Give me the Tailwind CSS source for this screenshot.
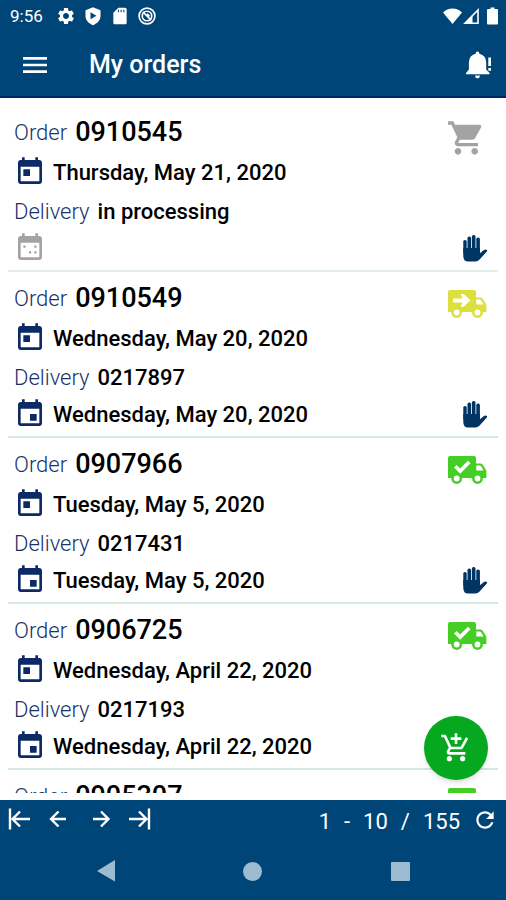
<!doctype html>
<html lang="en">
  <head>
    <meta charset="UTF-8" />
    <meta name="viewport" content="width=device-width, initial-scale=1.0" />
    <script src="https://cdn.jsdelivr.net/npm/@tailwindcss/browser@4"></script>
    <title>My orders</title>
  </head>
  <body class="bg-white text-black font-['Roboto',sans-serif]">
    <!-- Shared icons -->
    <svg class="hidden" aria-hidden="true">
      <symbol id="today" viewBox="0 0 24 24">
        <path d="M19 3h-1V1h-2v2H8V1H6v2H5c-1.11 0-1.99.9-1.99 2L3 19c0 1.1.89 2 2 2h14c1.1 0 2-.9 2-2V5c0-1.1-.9-2-2-2zm0 16H5V8h14v11zM7 10h5v5H7z" />
      </symbol>
      <symbol id="event" viewBox="0 0 24 24">
        <path d="M17 12h-5v5h5v-5zM16 1v2H8V1H6v2H5c-1.11 0-1.99.9-1.99 2L3 19c0 1.1.89 2 2 2h14c1.1 0 2-.9 2-2V5c0-1.1-.9-2-2-2h-1V1h-2zm3 18H5V8h14v11z" />
      </symbol>
      <symbol id="no-date" viewBox="0 0 24 24">
        <path d="M19 3h-1V1h-2v2H8V1H6v2H5c-1.11 0-1.99.9-1.99 2L3 19c0 1.1.89 2 2 2h14c1.1 0 2-.9 2-2V5c0-1.1-.9-2-2-2zm0 16H5V8h14v11z" />
        <path d="M7 10.2h1.7v1.7H7zM15.2 10.2h1.7v1.7h-1.7zM11.2 14.4h1.7v1.7h-1.7zM15.2 14.4h1.7v1.7h-1.7z" />
      </symbol>
      <symbol id="cart" viewBox="1 0 24 24">
        <path d="M7 18c-1.1 0-1.99.9-1.99 2S5.9 22 7 22s2-.9 2-2-.9-2-2-2zM1 2v2h2l3.6 7.59-1.35 2.45c-.16.28-.25.61-.25.96 0 1.1.9 2 2 2h12v-2H7.42c-.14 0-.25-.11-.25-.25l.03-.12.9-1.63h7.45c.75 0 1.41-.41 1.75-1.03l3.58-6.49c.08-.14.12-.31.12-.48 0-.55-.45-1-1-1H5.21l-.94-2H1zm16 16c-1.1 0-1.99.9-1.99 2s.89 2 1.99 2 2-.9 2-2-.9-2-2-2z" />
      </symbol>
      <symbol id="truck" viewBox="0 -6 40 40">
        <path d="M2 0h24q2 0 2 2v5.5h4.2q1.6 0 2.5 1.3l3 4.8q.7 1 .7 2.2V22H0V2Q0 0 2 0z" />
        <path fill="#fff" d="M28.3 9.6h3.5q.9 0 1.4.8l2.5 4H28.3z" />
        <circle cx="8.7" cy="22.5" r="5.4" />
        <circle cx="29.5" cy="22.5" r="5.4" />
        <circle cx="8.7" cy="22.5" r="2.9" fill="#fff" />
        <circle cx="29.5" cy="22.5" r="2.9" fill="#fff" />
      </symbol>
      <symbol id="truck-sent" viewBox="0 -6 40 40">
        <use href="#truck" x="0" y="-6" width="40" height="40" />
        <path fill="#fff" d="M5 8.4h9.4L12.7 4h3l6.8 6.3-6.8 6.4h-3l1.7-4.3H5z" />
      </symbol>
      <symbol id="truck-done" viewBox="0 -6 40 40">
        <use href="#truck" x="0" y="-6" width="40" height="40" />
        <path fill="none" stroke="#fff" stroke-width="3.6" d="M7.3 10.2l4.9 4.9 9-9.2" />
      </symbol>
      <symbol id="hand" viewBox="0 0 25 27">
        <rect x=".3" y="5" width="3.4" height="14" rx="1.6" />
        <rect x="4.5" y="1.6" width="3.6" height="16" rx="1.6" />
        <rect x="8.9" y="0" width="3.6" height="17" rx="1.6" />
        <rect x="13.3" y="2.6" width="3.6" height="16" rx="1.6" />
        <path d="M.3 13h16.6v5.2l4-3.2q1.6-1 3 0 .8.9-.3 1.8l-7 7.7q-1.8 2.1-4.2 2.1H5.2Q.3 26.6.3 21z" />
      </symbol>
    </svg>

    <div class="flex h-screen flex-col">
      <header class="border-b-2 border-[#00276a] bg-[#004577] text-white">
        <div class="flex h-8 items-center pr-2 pl-[10px]">
          <span class="text-[17px] leading-8">9:56</span>
          <div class="ml-[13px] flex items-center gap-[7px]">
            <svg class="size-5" viewBox="0 0 24 24" fill="currentColor">
              <path d="M19.14 12.94c.04-.3.06-.61.06-.94 0-.32-.02-.64-.07-.94l2.03-1.58c.18-.14.23-.41.12-.61l-1.92-3.32c-.12-.22-.37-.29-.59-.22l-2.39.96c-.5-.38-1.03-.7-1.62-.94l-.36-2.54c-.04-.24-.24-.41-.48-.41h-3.84c-.24 0-.43.17-.47.41l-.36 2.54c-.59.24-1.13.57-1.62.94l-2.39-.96c-.22-.08-.47 0-.59.22L2.74 8.87c-.12.21-.08.47.12.61l2.03 1.58c-.05.3-.09.63-.09.94s.02.64.07.94l-2.03 1.58c-.18.14-.23.41-.12.61l1.92 3.32c.12.22.37.29.59.22l2.39-.96c.5.38 1.03.7 1.62.94l.36 2.54c.05.24.24.41.48.41h3.84c.24 0 .44-.17.47-.41l.36-2.54c.59-.24 1.13-.56 1.62-.94l2.39.96c.22.08.47 0 .59-.22l1.92-3.32c.12-.22.07-.47-.12-.61l-2.01-1.58zM12 15.6c-1.98 0-3.6-1.62-3.6-3.6s1.62-3.6 3.6-3.6 3.6 1.62 3.6 3.6-1.62 3.6-3.6 3.6z" />
            </svg>
            <svg class="size-5" viewBox="0 0 24 24" fill="currentColor" fill-rule="evenodd">
              <path d="M12 1.5l9 3.5v7c0 5-3.8 9-9 11-5.2-2-9-6-9-11V5zM9 7.5V16l7-4.2z" />
            </svg>
            <svg class="size-5" viewBox="0 0 24 24" fill="currentColor" fill-rule="evenodd">
              <path d="M18 2h-8L4 8v12c0 1.1.9 2 2 2h12c1.1 0 2-.9 2-2V4c0-1.1-.9-2-2-2zM9.5 4.5h1.3v3H9.5zm3.2 0H14v3h-1.3zm3.2 0h1.3v3h-1.3z" />
            </svg>
            <svg class="size-5" viewBox="0 0 24 24" fill="none" stroke="currentColor" stroke-width="2">
              <circle cx="12" cy="12" r="9.5" />
              <circle cx="12" cy="12" r="5.7" />
              <path d="M7 7l10 10M12 9.5l3 3" />
            </svg>
          </div>
          <div class="ml-auto flex items-center">
            <svg class="h-5 w-[19px]" viewBox="0 0 19 20" fill="currentColor">
              <path d="M0 6.5Q4 2.5 9.5 2.5T19 6.5L9.5 18z" />
            </svg>
            <svg class="ml-px h-5 w-4" viewBox="0 0 16 20" fill="none" stroke="currentColor" stroke-width="1.6">
              <path d="M2 17.2h13V4z" />
              <path fill="currentColor" stroke="none" d="M1 18L9.5 9v9z" />
            </svg>
            <svg class="ml-2 h-5 w-[11px]" viewBox="0 0 11 20" fill="currentColor">
              <path d="M3.500 1.500h4V3H10q1 0 1 1v13.500q0 1-1 1H1q-1 0-1-1V4q0-1 1-1h2.500z" />
            </svg>
          </div>
        </div>
        <div class="flex h-16 items-center pt-[2px] pr-[14px] pl-[19px]">
          <button type="button" aria-label="Menu">
            <svg class="size-8" viewBox="0 0 24 24" fill="currentColor">
              <path d="M3 18h18v-2H3v2zm0-5h18v-2H3v2zm0-7v2h18V6H3z" />
            </svg>
          </button>
          <h1 class="ml-[38px] text-[25px] leading-8 font-medium">My orders</h1>
          <button type="button" class="ml-auto" aria-label="Notifications">
            <svg class="h-7 w-[26px]" viewBox="0 0 26 28" fill="currentColor">
              <path d="M11.5.5q1.7 0 1.9 2.2 6.8 1.8 6.8 8.8v7l3.3 3.6v1.2H0v-1.2l2.9-3.6v-7q0-7 6.7-8.8Q9.800.5 11.5.5z" />
              <path d="M9 24.5h5q-.2 2.7-2.5 2.7T9 24.5zM22.3 6.5H25V15h-2.7zM22.3 17H25v2.7h-2.7z" />
            </svg>
          </button>
        </div>
      </header>

      <div class="relative flex min-h-0 flex-1 flex-col pb-[7px]">
        <main class="min-h-0 flex-1 overflow-hidden px-2 pt-2">
          <article class="flex justify-between border-b-2 border-[#e2efea] px-[6px] pt-[6px] pb-1">
            <div>
              <p class="flex h-10 items-center gap-2 text-[27px] font-medium">
                <span class="text-[22px] font-light text-[#17336b]">Order</span>0910545
              </p>
              <p class="flex h-10 items-center gap-[7px] text-[22px] font-medium">
                <svg class="size-8 fill-[#0b2a66]"><use href="#today" /></svg>Thursday, May 21, 2020
              </p>
              <p class="flex h-[38px] items-center gap-2 text-[22px] font-medium">
                <span class="font-light text-[#17336b]">Delivery</span>in processing
              </p>
              <p class="flex h-9 items-center">
                <svg class="size-8 fill-[#a3a3a3]"><use href="#no-date" /></svg>
              </p>
            </div>
            <div class="flex flex-col items-end justify-between pt-[6px] pr-1 pb-1">
              <svg class="size-10 fill-[#a3a3a3]"><use href="#cart" /></svg>
              <svg class="h-[27px] w-[25px] fill-[#003463]"><use href="#hand" /></svg>
            </div>
          </article>

          <article class="flex justify-between border-b-2 border-[#d5eadf] px-[6px] pt-[6px] pb-1">
            <div>
              <p class="flex h-10 items-center gap-2 text-[27px] font-medium">
                <span class="text-[22px] font-light text-[#17336b]">Order</span>0910549
              </p>
              <p class="flex h-10 items-center gap-[7px] text-[22px] font-medium">
                <svg class="size-8 fill-[#0b2a66]"><use href="#today" /></svg>Wednesday, May 20, 2020
              </p>
              <p class="flex h-[38px] items-center gap-2 text-[22px] font-medium">
                <span class="font-light text-[#17336b]">Delivery</span>0217897
              </p>
              <p class="flex h-9 items-center gap-[7px] text-[22px] font-medium">
                <svg class="size-8 fill-[#0b2a66]"><use href="#event" /></svg>Wednesday, May 20, 2020
              </p>
            </div>
            <div class="flex flex-col items-end justify-between pt-[6px] pr-1 pb-1">
              <svg class="size-10 fill-[#dde03c]"><use href="#truck-sent" /></svg>
              <svg class="h-[27px] w-[25px] fill-[#003463]"><use href="#hand" /></svg>
            </div>
          </article>

          <article class="flex justify-between border-b-2 border-[#d5eadf] px-[6px] pt-[6px] pb-1">
            <div>
              <p class="flex h-10 items-center gap-2 text-[27px] font-medium">
                <span class="text-[22px] font-light text-[#17336b]">Order</span>0907966
              </p>
              <p class="flex h-10 items-center gap-[7px] text-[22px] font-medium">
                <svg class="size-8 fill-[#0b2a66]"><use href="#today" /></svg>Tuesday, May 5, 2020
              </p>
              <p class="flex h-[38px] items-center gap-2 text-[22px] font-medium">
                <span class="font-light text-[#17336b]">Delivery</span>0217431
              </p>
              <p class="flex h-9 items-center gap-[7px] text-[22px] font-medium">
                <svg class="size-8 fill-[#0b2a66]"><use href="#event" /></svg>Tuesday, May 5, 2020
              </p>
            </div>
            <div class="flex flex-col items-end justify-between pt-[6px] pr-1 pb-1">
              <svg class="size-10 fill-[#45cf26]"><use href="#truck-done" /></svg>
              <svg class="h-[27px] w-[25px] fill-[#003463]"><use href="#hand" /></svg>
            </div>
          </article>

          <article class="flex justify-between border-b-2 border-[#d5eadf] px-[6px] pt-[6px] pb-1">
            <div>
              <p class="flex h-10 items-center gap-2 text-[27px] font-medium">
                <span class="text-[22px] font-light text-[#17336b]">Order</span>0906725
              </p>
              <p class="flex h-10 items-center gap-[7px] text-[22px] font-medium">
                <svg class="size-8 fill-[#0b2a66]"><use href="#today" /></svg>Wednesday, April 22, 2020
              </p>
              <p class="flex h-[38px] items-center gap-2 text-[22px] font-medium">
                <span class="font-light text-[#17336b]">Delivery</span>0217193
              </p>
              <p class="flex h-9 items-center gap-[7px] text-[22px] font-medium">
                <svg class="size-8 fill-[#0b2a66]"><use href="#event" /></svg>Wednesday, April 22, 2020
              </p>
            </div>
            <div class="flex flex-col items-end justify-between pt-[6px] pr-1 pb-1">
              <svg class="size-10 fill-[#45cf26]"><use href="#truck-done" /></svg>
            </div>
          </article>

          <article class="flex justify-between px-[6px] pt-[6px]">
            <p class="flex h-10 items-center gap-2 text-[27px] font-medium">
              <span class="text-[22px] font-light text-[#17336b]">Order</span>0905307
            </p>
            <div class="pt-[6px] pr-1">
              <svg class="size-10 fill-[#45cf26]"><use href="#truck-done" /></svg>
            </div>
          </article>
        </main>

        <button
          type="button"
          aria-label="New order"
          class="absolute right-[18px] bottom-5 flex size-16 items-center justify-center rounded-full bg-[#06a81f] text-white shadow-md"
        >
          <svg class="size-8" viewBox="0 0 24 24" fill="currentColor">
            <path d="M11 9h2V6h3V4h-3V1h-2v3H8v2h3v3zm-4 9c-1.1 0-1.99.9-1.99 2S5.9 22 7 22s2-.9 2-2-.9-2-2-2zm10 0c-1.1 0-1.99.9-1.99 2s.89 2 1.99 2 2-.9 2-2-.9-2-2-2zm-9.83-3.25l.03-.12.9-1.63h7.45c.75 0 1.41-.41 1.75-1.03l3.86-7.01L19.42 4h-.01l-1.1 2-2.76 5H8.53l-.13-.27L6.16 6l-.95-2-.94-2H1v2h2l3.6 7.59-1.35 2.45c-.16.28-.25.61-.25.96 0 1.1.9 2 2 2h12v-2H7.42c-.13 0-.25-.11-.25-.25z" />
          </svg>
        </button>
      </div>

      <footer class="bg-[#004577] text-white">
        <div class="flex h-[42px] items-center justify-between px-2 pt-[2px]">
          <div class="flex items-center pb-[6px]">
            <button type="button" aria-label="First page">
              <svg class="h-[22px] w-[22px]" viewBox="0 0 22 22" fill="none" stroke="currentColor" stroke-width="2.4">
                <path d="M2 .5v21M22 11H5M12 3.5L4.5 11l7.5 7.5" />
              </svg>
            </button>
            <button type="button" aria-label="Previous page" class="ml-[19px]">
              <svg class="h-[22px] w-[18px]" viewBox="0 0 18 22" fill="none" stroke="currentColor" stroke-width="2.4">
                <path d="M17 11H2.5M9.5 3.5L2 11l7.5 7.5" />
              </svg>
            </button>
            <button type="button" aria-label="Next page" class="ml-[26px]">
              <svg class="h-[22px] w-[18px]" viewBox="0 0 18 22" fill="none" stroke="currentColor" stroke-width="2.4">
                <path d="M0 11h15.5M8 3.5l7.5 7.5L8 18.5" />
              </svg>
            </button>
            <button type="button" aria-label="Last page" class="ml-[18px]">
              <svg class="h-[22px] w-[22px]" viewBox="0 0 22 22" fill="none" stroke="currentColor" stroke-width="2.4">
                <path d="M20 .5v21M0 11h17M10 3.5l7.5 7.5-7.5 7.5" />
              </svg>
            </button>
          </div>
          <div class="flex items-center">
            <p class="flex gap-[13px] text-[22px] leading-10">
              <span>1</span><span>-</span><span>10</span><span>/</span><span>155</span>
            </p>
            <button type="button" aria-label="Refresh" class="ml-3 pb-1">
              <svg class="size-[26px]" viewBox="0 0 24 24" fill="currentColor">
                <path d="M17.65 6.35C16.2 4.9 14.21 4 12 4c-4.42 0-7.99 3.58-7.99 8s3.57 8 7.99 8c3.73 0 6.84-2.55 7.73-6h-2.08c-.82 2.33-3.04 4-5.65 4-3.31 0-6-2.69-6-6s2.69-6 6-6c1.66 0 3.14.69 4.22 1.78L13 11h7V4l-2.35 2.35z" />
              </svg>
            </button>
          </div>
        </div>
        <nav class="grid h-[58px] grid-cols-3 place-items-center px-8 text-[#9dbbd0]">
          <button type="button" aria-label="Back">
            <svg class="h-[22px] w-5" viewBox="0 0 20 22" fill="currentColor"><path d="M19 0v21.5L1 11z" /></svg>
          </button>
          <button type="button" aria-label="Home" class="size-[19px] rounded-full bg-current"></button>
          <button type="button" aria-label="Recent apps" class="size-[19px] rounded-[1px] bg-current"></button>
        </nav>
      </footer>
    </div>
  </body>
</html>
